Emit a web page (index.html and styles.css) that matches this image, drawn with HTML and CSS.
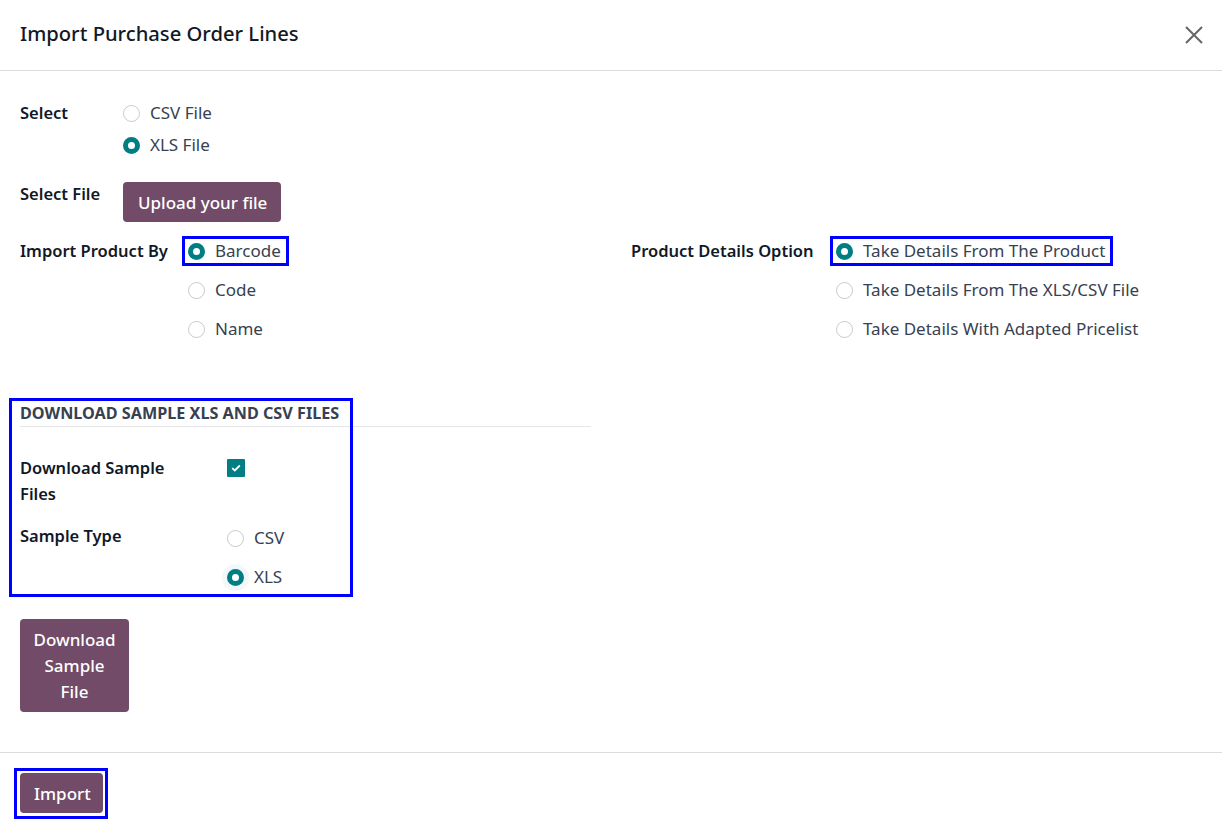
FILE: index.html
```html
<!DOCTYPE html>
<html lang="en">
<head>
<meta charset="utf-8">
<title>Import Purchase Order Lines</title>
<link rel="stylesheet" href="styles.css">
</head>
<body>
<div class="modal">
  <header class="modal-header">
    <h4 class="modal-title">Import Purchase Order Lines</h4>
    <button class="btn-close" aria-label="Close">
      <svg width="20" height="20" viewBox="0 0 20 20"><path d="M2 2 L18 18 M18 2 L2 18" stroke="#666" stroke-width="2" fill="none"/></svg>
    </button>
  </header>

  <main class="modal-body">
    <div class="group group-select">
      <div class="label">Select</div>
      <div class="radio-list tight">
        <label class="radio-item"><span class="radio"></span><span class="radio-text">CSV File</span></label>
        <label class="radio-item"><span class="radio checked"></span><span class="radio-text">XLS File</span></label>
      </div>
      <div class="label">Select File</div>
      <div><button class="btn btn-primary btn-upload">Upload your file</button></div>
    </div>

    <div class="columns">
      <div class="group group-by">
        <div class="label">Import Product By</div>
        <div class="radio-list">
          <label class="radio-item highlight"><span class="radio checked"></span><span class="radio-text">Barcode</span></label>
          <label class="radio-item"><span class="radio"></span><span class="radio-text">Code</span></label>
          <label class="radio-item"><span class="radio"></span><span class="radio-text">Name</span></label>
        </div>
      </div>
      <div class="group group-details">
        <div class="label">Product Details Option</div>
        <div class="radio-list">
          <label class="radio-item highlight"><span class="radio checked"></span><span class="radio-text">Take Details From The Product</span></label>
          <label class="radio-item"><span class="radio"></span><span class="radio-text">Take Details From The XLS/CSV File</span></label>
          <label class="radio-item"><span class="radio"></span><span class="radio-text">Take Details With Adapted Pricelist</span></label>
        </div>
      </div>
    </div>

    <div class="columns">
      <section class="sample">
        <div class="sample-box">
          <h5 class="sample-title">Download Sample XLS and CSV Files</h5>
          <div class="group group-sample">
            <div class="label wrap">Download Sample Files</div>
            <div class="check-cell"><span class="checkbox"><svg width="10" height="8" viewBox="0 0 10 8"><path d="M1.2 4.2 L3.8 6.5 L8.8 1.5" stroke="#fff" stroke-width="1.8" fill="none"/></svg></span></div>
            <div class="label">Sample Type</div>
            <div class="radio-list">
              <label class="radio-item"><span class="radio"></span><span class="radio-text">CSV</span></label>
              <label class="radio-item"><span class="radio checked focus"></span><span class="radio-text">XLS</span></label>
            </div>
          </div>
        </div>
      </section>
      <div></div>
    </div>

    <button class="btn btn-primary btn-download">Download Sample File</button>
  </main>

  <footer class="modal-footer">
    <span class="highlight-wrap"><button class="btn btn-primary btn-import">Import</button></span>
  </footer>
</div>
</body>
</html>
```

FILE: styles.css
```css
*, *::before, *::after { box-sizing: border-box; }

html, body {
  margin: 0;
  padding: 0;
  background: #ffffff;
}

body {
  font-family: "Noto Sans", "Open Sans", "Liberation Sans", sans-serif;
  font-size: 17px;
  color: #111827;
}

.modal {
  width: 1222px;
  height: 833px;
  display: flex;
  flex-direction: column;
  background: #fff;
}

.modal-header {
  height: 71px;
  padding: 0 20px 4px 20px;
  display: flex;
  align-items: center;
  justify-content: space-between;
  border-bottom: 1px solid #dcdcdc;
}

.modal-title {
  margin: 0;
  font-size: 20.2px;
  font-weight: 500;
  color: #111827;
}

.btn-close {
  border: 0;
  background: transparent;
  padding: 0;
  width: 20px;
  height: 20px;
  margin-right: -2px;
  margin-top: 4px;
  display: flex;
}

.modal-body {
  flex: 1;
  padding: 30px 20px 0 20px;
}

.group {
  display: grid;
  align-items: start;
}

.label {
  font-size: 16.5px;
  font-weight: 600;
  line-height: 24px;
  color: #111827;
}

.group-select {
  grid-template-columns: 103px 1fr;
  row-gap: 25px;
}

.radio-list {
  display: flex;
  flex-direction: column;
  gap: 15px;
  align-items: flex-start;
}

.radio-list.tight {
  gap: 8px;
}

.radio-item {
  display: flex;
  align-items: center;
  height: 24px;
  gap: 10px;
  color: #374151;
  line-height: 24px;
}

.radio {
  width: 17px;
  height: 17px;
  border-radius: 50%;
  border: 1px solid #c6c9cd;
  background: #fff;
  flex: none;
}

.radio.checked {
  border: 5px solid #017e84;
  background: #fff;
}

.radio.focus {
  box-shadow: 0 0 0 5px rgba(1, 126, 132, 0.05);
}

.columns {
  display: grid;
  grid-template-columns: 1fr 1fr;
  column-gap: 40px;
}

.group-by {
  grid-template-columns: 165px 1fr;
  margin-top: 17px;
}

.group-by .radio-item,
.group-details .radio-item {
  padding: 0 5px 0 3px;
}

.group-details {
  grid-template-columns: 202px 1fr;
  margin-top: 17px;
}

.highlight {
  outline: 3px solid #0000ff;
  outline-offset: 0;
}

.sample {
  margin-top: 58px;
}

.sample-box {
  position: relative;
}

.sample-box::before {
  content: "";
  position: absolute;
  left: -11px;
  top: -1px;
  width: 344px;
  height: 199px;
  border: 3px solid #0000ff;
  pointer-events: none;
}

.sample-title {
  margin: 0;
  font-size: 16.2px;
  font-weight: 700;
  text-transform: uppercase;
  color: #374151;
  line-height: 22px;
  padding-top: 3px;
  padding-bottom: 2px;
  border-bottom: 1px solid #e5e7eb;
}

.group-sample {
  grid-template-columns: 207px 1fr;
  row-gap: 17px;
  margin-top: 28px;
}

.label.wrap {
  width: 175px;
  line-height: 26px;
}

.check-cell {
  padding-top: 4px;
}

.checkbox {
  width: 18px;
  height: 18px;
  background: #017e84;
  display: flex;
  align-items: center;
  justify-content: center;
  border-radius: 1px;
}

.group-sample .radio-list {
  padding-top: 2px;
}

.btn {
  font-family: inherit;
  font-size: 17px;
  font-weight: 500;
  border: 0;
  border-radius: 4px;
  cursor: pointer;
}

.btn-primary {
  background: #714b67;
  color: #ffffff;
  height: 40px;
  padding: 0 14px;
}

.btn-upload {
  padding: 0 14px 0 15px;
}

.btn-download {
  display: block;
  margin-top: 30px;
  width: 109px;
  height: 93px;
  line-height: 26px;
  padding: 0 12px;
  text-align: center;
}

.modal-footer {
  border-top: 1px solid #dcdcdc;
  height: 81px;
  padding: 15px 20px 0 14px;
}

.highlight-wrap {
  display: inline-flex;
  border: 3px solid #0000ff;
  padding: 2px 2px 3px 3px;
}

.btn-import {
  padding: 0 14px;
  width: 83px;
}
```
